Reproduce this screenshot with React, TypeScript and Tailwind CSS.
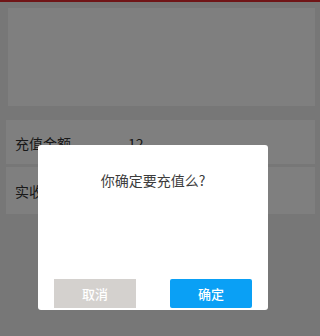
const font = "font-['Noto_Sans_CJK_SC','Liberation_Sans',sans-serif]";

const Row = ({ label, value, last }: { label: string; value: string; last?: boolean }) => (
  <div
    className={`flex h-[47px] items-center px-[9px] pt-[2px] text-[14px] text-[#333] ${
      last ? "" : "border-b-[3px] border-[#eeeeee]"
    }`}
  >
    <span className="w-[113px]">{label}</span>
    <span>{value}</span>
  </div>
);

const App = () => {
  return (
    <div className={`relative h-[336px] w-full overflow-hidden bg-[#efefef] ${font}`}>
      <div className="h-[2px] bg-[#e02a2f]" />
      <div className="pl-[8px] pr-[5px] pt-[6px]">
        <div className="h-[98px] bg-white" />
      </div>
      <div className="mt-[14px] pl-[6px] pr-[5px]">
        <div className="bg-white">
          <Row label="充值金额" value="12" />
          <Row label="实收金额" value="12" last />
        </div>
      </div>

      <div className="absolute inset-0 bg-black/50" />

      <div className="absolute left-[38px] top-[145px] flex h-[165px] w-[230px] flex-col rounded-[3px] bg-white">
        <p className="pt-[25px] text-center text-[14px] text-[#3c3c3c]">
          你确定要充值么?
        </p>
        <div className="mt-auto flex justify-between px-[16px] pb-[2px]">
          <button className="h-[29px] w-[82px] bg-[#d4d1ce] text-[13px] font-medium text-white">
            取消
          </button>
          <button className="h-[29px] w-[82px] rounded-[2px] bg-[#0aa0f5] text-[13px] font-medium text-white">
            确定
          </button>
        </div>
      </div>
    </div>
  );
};

export default App;
